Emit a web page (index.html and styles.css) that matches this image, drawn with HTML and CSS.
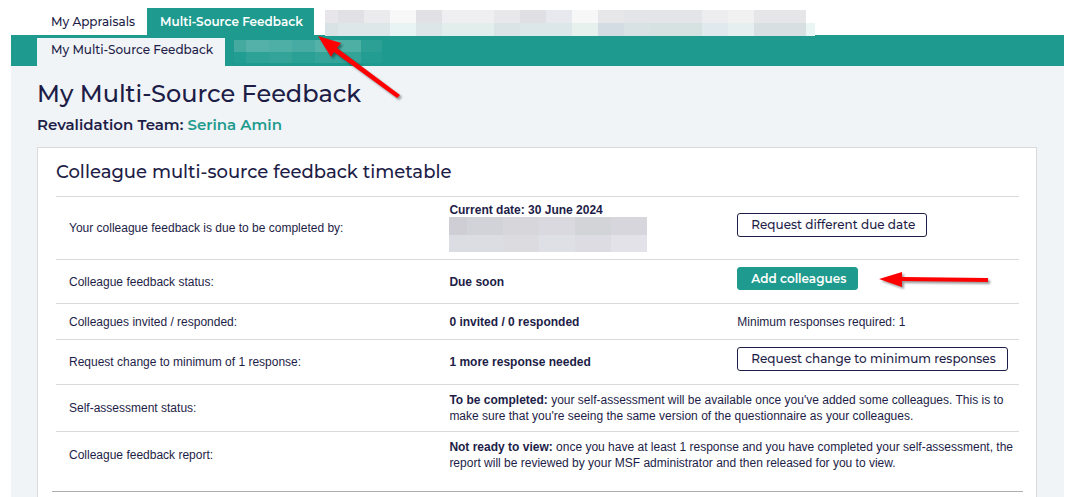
FILE: index.html
```html
<!DOCTYPE html>
<html lang="en">
<head>
  <meta charset="UTF-8">
  <meta name="viewport" content="width=device-width, initial-scale=1.0">
  <title>My Multi-Source Feedback</title>
  <link rel="stylesheet" href="styles.css">
</head>
<body>

<nav class="tabs">
  <a class="tab" href="#">My Appraisals</a>
  <a class="tab active" href="#">Multi-Source Feedback</a>
  <svg class="redacted-tabs" width="490" height="26" shape-rendering="crispEdges" aria-hidden="true">
    <path fill="#e8e6eb" d="M0 0h13v13H0z"/><path fill="#e1e0e5" d="M13 0h26v13H13z"/>
    <path fill="#ebebed" d="M39 0h26v13H39z"/><path fill="#f8f8f8" d="M65 0h26v13H65z"/>
    <path fill="#e1e0e5" d="M91 0h26v13H91z"/><path fill="#efeff1" d="M117 0h52v13h-52z"/>
    <path fill="#e8e8ea" d="M169 0h26v13h-26z"/><path fill="#e0dfe4" d="M195 0h26v13h-26z"/>
    <path fill="#e8e9ee" d="M221 0h26v13h-26z"/><path fill="#f7f7f7" d="M247 0h26v13h-26z"/>
    <path fill="#e7e6e8" d="M273 0h26v13h-26z"/><path fill="#e4e5e9" d="M299 0h78v13h-78z"/>
    <path fill="#ededef" d="M377 0h26v13h-26z"/><path fill="#f1f1f1" d="M403 0h26v13h-26z"/>
    <path fill="#e6e5e8" d="M429 0h52v13h-52z"/>
    <path fill="#d9e2e4" d="M0 13h13v13H0z"/><path fill="#dde7e9" d="M13 13h52v13H13z"/>
    <path fill="#e8f3f4" d="M65 13h26v13H65z"/><path fill="#dce6e8" d="M91 13h26v13H91z"/>
    <path fill="#e1eeec" d="M117 13h52v13h-52z"/><path fill="#dae4e7" d="M169 13h26v13h-26z"/>
    <path fill="#dce7e9" d="M195 13h52v13h-52z"/><path fill="#e6f1ee" d="M247 13h26v13h-26z"/>
    <path fill="#d4dce3" d="M273 13h26v13h-26z"/><path fill="#d8e2e4" d="M299 13h26v13h-26z"/>
    <path fill="#d6e1e1" d="M325 13h52v13h-52z"/><path fill="#e0e9ed" d="M377 13h26v13h-26z"/>
    <path fill="#e5efef" d="M403 13h26v13h-26z"/><path fill="#d7dfe3" d="M429 13h52v13h-52z"/>
    <path fill="#eaf6f4" d="M481 13h9v13h-9z"/>
  </svg>
</nav>

<nav class="subtabs">
  <a class="subtab" href="#">My Multi-Source Feedback</a>
  <svg class="redacted-subtab" width="148" height="23" shape-rendering="crispEdges" aria-hidden="true">
    <path fill="#44a99f" d="M0 0h12v12H0z"/><path fill="#54b1a9" d="M12 0h23v12H12z"/>
    <path fill="#4dafa5" d="M35 0h23v12H35z"/><path fill="#47aba3" d="M58 0h23v12H58z"/>
    <path fill="#55b2a9" d="M81 0h23v12H81z"/><path fill="#4eafa5" d="M104 0h23v12h-23z"/>
    <path fill="#2ca095" d="M127 0h21v12h-21z"/>
    <path fill="#229d91" d="M0 12h12v11H0z"/><path fill="#2fa297" d="M12 12h23v11H12z"/>
    <path fill="#34a499" d="M35 12h23v11H35z"/><path fill="#2ba095" d="M58 12h23v11H58z"/>
    <path fill="#34a499" d="M81 12h46v11H81z"/><path fill="#239d91" d="M127 12h21v11h-21z"/>
  </svg>
</nav>

<svg class="arrow arrow-tab" width="92" height="72" aria-hidden="true">
  <path d="M2 2L25 9l-4 5 63 47-3 3-63-46-3 5z"/>
</svg>

<main class="page">
  <h1>My Multi-Source Feedback</h1>
  <p class="team">Revalidation Team: <a href="#">Serina Amin</a></p>

  <section class="card">
    <h2>Colleague multi-source feedback timetable</h2>
    <table class="timetable">
      <tr>
        <td class="label">Your colleague feedback is due to be completed by:</td>
        <td class="value">
          <div class="date">Current date: 30 June 2024</div>
          <svg class="redacted-date" width="198" height="35" shape-rendering="crispEdges" aria-hidden="true">
            <path fill="#cfced4" d="M0 0h18v18H0z"/><path fill="#d2d3d8" d="M18 0h36v18H18z"/>
            <path fill="#d6d6db" d="M54 0h36v18H54z"/><path fill="#dad9df" d="M90 0h36v18H90z"/>
            <path fill="#d2d4d8" d="M126 0h36v18h-36z"/><path fill="#d7d6dc" d="M162 0h36v18h-36z"/>
            <path fill="#dcdde2" d="M0 18h54v18H0z"/><path fill="#dbdbe0" d="M54 18h36v18H54z"/>
            <path fill="#dfe0e5" d="M90 18h36v18H90z"/><path fill="#dddce2" d="M126 18h36v18h-36z"/>
            <path fill="#e3e2e8" d="M162 18h36v18h-36z"/>
          </svg>
        </td>
        <td><button class="btn" type="button">Request different due date</button></td>
      </tr>
      <tr>
        <td class="label">Colleague feedback status:</td>
        <td class="value">Due soon</td>
        <td class="action">
          <button class="btn primary" type="button">Add colleagues</button>
          <svg class="arrow arrow-add" width="116" height="24" aria-hidden="true">
            <path d="M2 10l23-7v5l86 1v4l-86-1v6z"/>
          </svg>
        </td>
      </tr>
      <tr class="short">
        <td class="label">Colleagues invited / responded:</td>
        <td class="value">0 invited / 0 responded</td>
        <td>Minimum responses required: 1</td>
      </tr>
      <tr>
        <td class="label">Request change to minimum of 1 response:</td>
        <td class="value">1 more response needed</td>
        <td><button class="btn" type="button">Request change to minimum responses</button></td>
      </tr>
      <tr>
        <td class="label">Self-assessment status:</td>
        <td colspan="2"><b>To be completed:</b> your self-assessment will be available once you've added some colleagues. This is to make sure that you're seeing the same version of the questionnaire as your colleagues.</td>
      </tr>
      <tr>
        <td class="label">Colleague feedback report:</td>
        <td colspan="2"><b>Not ready to view:</b> once you have at least 1 response and you have completed your self-assessment, the report will be reviewed by your MSF administrator and then released for you to view.</td>
      </tr>
    </table>
    <hr>
  </section>
</main>

</body>
</html>
```

FILE: styles.css
```css
* {
  box-sizing: border-box;
}
body {
  position: relative;
  display: flex;
  flex-direction: column;
  min-height: 100vh;
  margin: 0;
  padding: 8px 1px 0 11px;
  background: #fff;
  color: #1d1d47;
  font: 12px/16px "Liberation Sans", Arial, sans-serif;
}
h1, h2, .team, .tab, .subtab, .btn {
  font-family: Montserrat, Inter, sans-serif;
  font-weight: 500;
}
a {
  color: #1e9b8e;
  text-decoration: none;
}
.tabs {
  display: flex;
  height: 27px;
  padding-left: 26px;
}
.tab, .subtab {
  padding: 0 12px 0 14px;
  color: #1d1d47;
  font-size: 12px;
  line-height: 27px;
  white-space: nowrap;
}
.tab.active {
  background: #1e9b8e;
  color: #fff;
  font-weight: 600;
  padding: 0 11px 0 13px;
}
.redacted-tabs {
  position: relative;
  flex: none;
  margin: 2px 0 0 11px;
}
.subtabs {
  display: flex;
  height: 31px;
  padding: 3px 0 0 26px;
  background: #1e9b8e;
}
.subtab {
  background: #f0f4f7;
  line-height: 24px;
}
.redacted-subtab {
  margin: 2px 0 0 9px;
}
.page {
  display: flex;
  flex: 1;
  flex-direction: column;
  padding: 12px 27px 0 26px;
  background: #f0f4f7;
}
h1 {
  margin: 0;
  font-size: 24px;
  line-height: 32px;
}
.team {
  margin: 5px 0 12px;
  font-size: 15px;
  font-weight: 600;
  line-height: 20px;
}
.card {
  flex: 1;
  padding: 12px 17px 0 18px;
  background: #fff;
  border: 1px solid #d9dadc;
  border-bottom: none;
}
h2 {
  margin: 0 0 12px;
  font-size: 18px;
  line-height: 24px;
}
.timetable {
  width: 100%;
  border-collapse: collapse;
  table-layout: fixed;
}
.timetable td {
  padding: 7px 4px 7px 13px;
  border-top: 1px solid #d9dadc;
}
.label {
  width: 39.5%;
}
.value {
  width: 29.9%;
  font-weight: bold;
}
.short td {
  height: 36px;
}
.date {
  line-height: 13px;
}
.redacted-date {
  display: block;
}
.btn {
  display: block;
  margin-bottom: 6px;
  padding: 0 11px 0 13px;
  background: #fff;
  border: 1px solid #1d1d47;
  border-radius: 3px;
  color: #1d1d47;
  font-size: 12px;
  line-height: 22px;
  white-space: nowrap;
  cursor: pointer;
}
.btn.primary {
  background: #1e9b8e;
  border-color: #1e9b8e;
  color: #fff;
  font-weight: 600;
  line-height: 21px;
}
hr {
  margin: 13px -4px 0;
  border: 0;
  border-top: 1px solid #aeafb1;
}
/* red pointer arrows */
.arrow {
  position: absolute;
  fill: #f00;
  filter: drop-shadow(2px 2px 1px rgba(0, 0, 0, 0.4));
}
.arrow-tab {
  top: 34px;
  left: 316px;
}
.action {
  position: relative;
}
.arrow-add {
  top: 9px;
  left: 153px;
}
```
